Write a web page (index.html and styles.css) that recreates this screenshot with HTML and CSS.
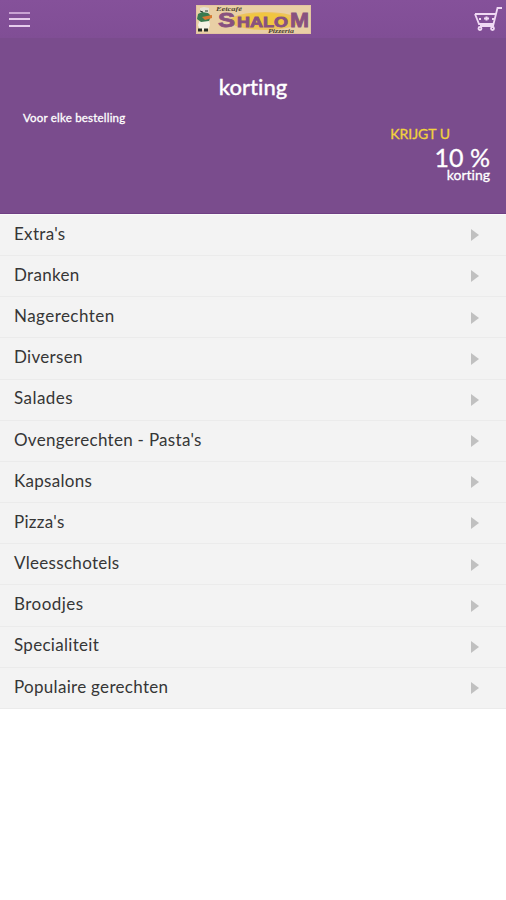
FILE: index.html
```html
<!DOCTYPE html>
<html lang="nl">
<head>
<meta charset="utf-8">
<title>Shalom</title>
<link rel="stylesheet" href="styles.css">
</head>
<body>
<header class="bar">
  <svg class="menu" width="22" height="18" viewBox="0 0 22 18"><path d="M0 3h21" stroke="#c9a3d3" stroke-width="2"/><path d="M0 9h21M0 16h21" stroke="#e6cbec" stroke-width="2"/></svg>
  <svg class="logo" width="115" height="29" viewBox="0 0 115 29">
    <rect width="115" height="29" fill="#e3c4a0"/>
    <rect x="1" y="1" width="113" height="27" fill="#e9cfa5"/>
    <ellipse cx="69" cy="16" rx="35" ry="9" fill="#edc45b"/>
    <ellipse cx="69" cy="15" rx="24" ry="7" fill="#f0c640"/>
    <path d="M4 3l4-1 5 1v4l-2 2-7-1z" fill="#e6e2d5"/>
    <path d="M4 15h9l1 5-2 5H4l-2-5z" fill="#f4f1e5"/>
    <path d="M2 9l4-2 6 1 3 3-2 5-8 1-4-3z" fill="#397b50"/>
    <path d="M4 6l3 1M9 6h3" stroke="#263c2d"/>
    <path d="M6 12l10-2v3l-7 2z" fill="#d97a31"/>
    <path d="M2 25h4M8 25h4" stroke="#242a24" stroke-width="3"/>
    <text class="logo-script" x="20" y="6" textLength="26" lengthAdjust="spacingAndGlyphs">Eetcafé</text>
    <text class="logo-cap" x="22" y="22" textLength="17" lengthAdjust="spacingAndGlyphs">S</text>
    <text class="logo-name" x="41" y="22" textLength="51" lengthAdjust="spacingAndGlyphs">HALO</text>
    <text class="logo-cap" x="94" y="22" textLength="19" lengthAdjust="spacingAndGlyphs">M</text>
    <text class="logo-script" x="72" y="27.500" textLength="26" lengthAdjust="spacingAndGlyphs">Pizzeria</text>
  </svg>
  <svg class="cart" width="30" height="27" viewBox="0 0 30 27" fill="none" stroke="#f0d9f4" stroke-width="1.800">
    <path d="M28 2h-4.500l-4.500 18H6M1 8h21M1 8l4 10h15M5 13h2M18 13h2"/><path d="M12.500 10.500v4M10 12.500h5" stroke-width="2"/><circle cx="6" cy="22.500" r="1.500"/><circle cx="18.500" cy="22.500" r="1.500"/>
  </svg>
</header>
<section class="promo">
  <h1 class="title">korting</h1>
  <p class="condition">Voor elke bestelling</p>
  <div class="offer">
    <p class="lead">KRIJGT U</p>
    <p class="amount">10 %</p>
    <p class="unit">korting</p>
  </div>
</section>
<ul class="list">
  <li class="row"><span>Extra's</span></li>
  <li class="row"><span>Dranken</span></li>
  <li class="row wide"><span>Nagerechten</span></li>
  <li class="row"><span>Diversen</span></li>
  <li class="row wide"><span>Salades</span></li>
  <li class="row"><span>Ovengerechten - Pasta's</span></li>
  <li class="row"><span>Kapsalons</span></li>
  <li class="row"><span>Pizza's</span></li>
  <li class="row"><span>Vleesschotels</span></li>
  <li class="row wide"><span>Broodjes</span></li>
  <li class="row"><span>Specialiteit</span></li>
  <li class="row"><span>Populaire gerechten</span></li>
</ul>
</body>
</html>
```
FILE: styles.css
```css
* { box-sizing: border-box; }
body { margin: 0; background: #fff; font-family: Lato, "Liberation Sans", sans-serif; font-variant-ligatures: none; }
h1, p, ul { margin: 0; padding: 0; }
.bar { height: 38px; display: flex; justify-content: space-between; align-items: flex-start; padding: 5px 2px 0 9px; background: linear-gradient(#85519a, #804e95); }
.menu { margin-top: 5px; }
.logo { margin-left: 1px; }
.cart { margin-top: 1px; }
.logo-name, .logo-cap { font: bold 14px "Liberation Sans", sans-serif; fill: #88517f; stroke: #88517f; stroke-width: .8px; }
.logo-cap { font-size: 20px; }
.logo-script { font: italic bold 6px "Liberation Serif", serif; fill: #4b4230; }
.promo { height: 176px; background: #7a4c8d; border-bottom: 1px solid #6f3f84; color: #fff; padding: 34px 16px 0 23px; }
.title { font-size: 22px; line-height: 30px; font-weight: 500; text-align: center; margin-right: 7px; -webkit-text-stroke: .3px #fff; }
.condition { font-size: 11.500px; line-height: 16px; margin-top: 8px; letter-spacing: .2px; -webkit-text-stroke: .3px #fff; }
.offer { text-align: right; }
.lead { font-size: 14px; line-height: 16px; color: #f2d33c; padding-right: 40px; -webkit-text-stroke: .3px #f2d33c; }
.amount { font-size: 25px; line-height: 25px; margin-top: 3px; -webkit-text-stroke: .3px #fff; }
.unit { font-size: 14px; line-height: 14px; margin-top: -2px; -webkit-text-stroke: .3px #fff; }
.list { list-style: none; border-top: 1px solid #fafafa; }
.row { height: 41.170px; display: flex; justify-content: space-between; align-items: center; padding: 0 27px 0 14px; background: #f3f3f3; border-bottom: 1px solid #ebebeb; color: #363636; font-size: 17px; line-height: 24px; letter-spacing: .3px; }
.row.wide { letter-spacing: .45px; }
.row span { margin-top: -2.500px; }
.row::after { content: ""; margin-top: .5px; border-left: 8px solid #c0c0c0; border-top: 6px solid transparent; border-bottom: 6px solid transparent; }
```
